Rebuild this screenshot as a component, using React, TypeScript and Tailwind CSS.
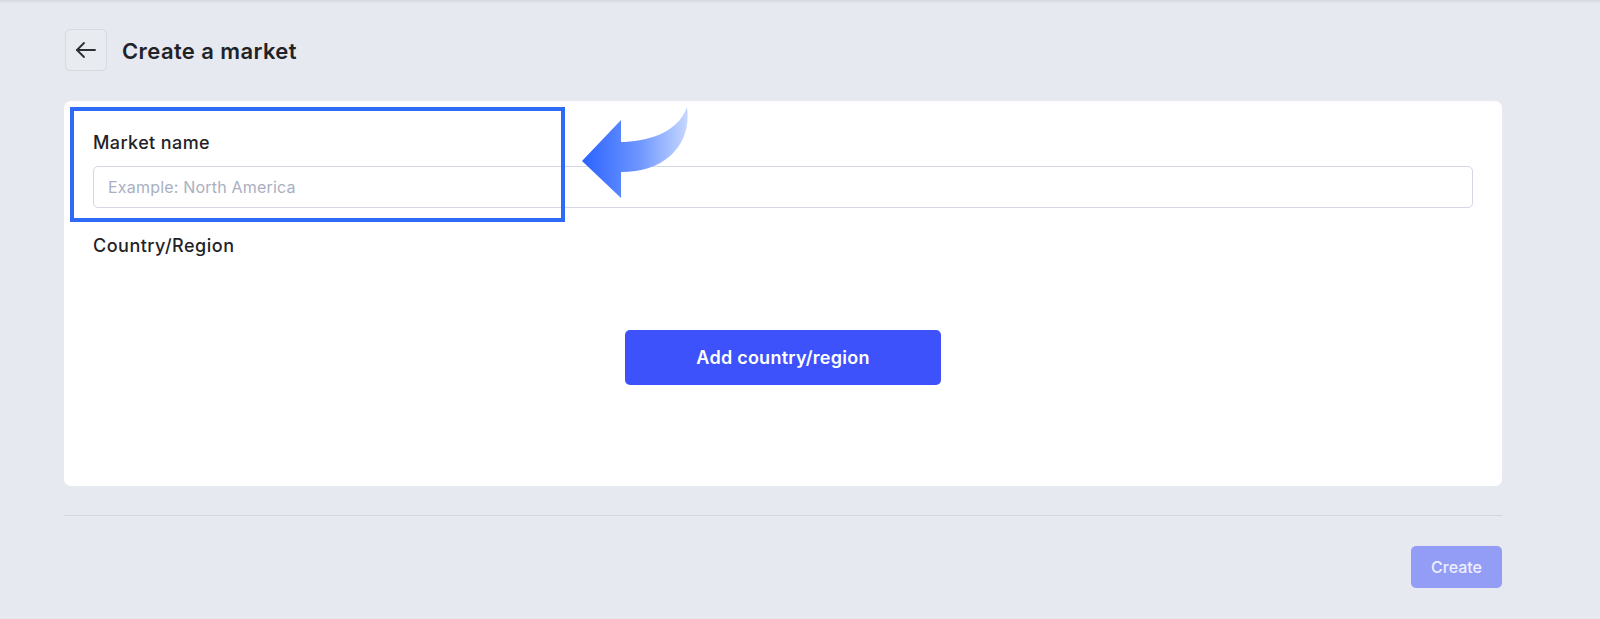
import React from 'react'

const CurvedArrow = () => (
  <svg width="108" height="94" viewBox="0 0 108 94" fill="none">
    <defs>
      <linearGradient id="arrowGrad" x1="0" y1="0" x2="1" y2="0">
        <stop offset="0%" stopColor="#2a62ff" />
        <stop offset="55%" stopColor="#6f97ff" />
        <stop offset="100%" stopColor="#c6d7ff" />
      </linearGradient>
    </defs>
    <path
      d="M0 55 L39 14 L39 36 C62 36 96 28 105 1 C110 38 84 66 39 66 L39 92 Z"
      fill="url(#arrowGrad)"
    />
  </svg>
)

const BackIcon = () => (
  <svg width="22" height="22" viewBox="0 0 22 22" fill="none" stroke="#2b2f36" strokeWidth="1.8" strokeLinecap="round" strokeLinejoin="round">
    <path d="M20 11H2" />
    <path d="M9 4l-7 7 7 7" />
  </svg>
)

const App = () => {
  return (
    <div className="w-full min-h-[619px] bg-[#e6e9ef] font-['Inter',sans-serif] text-[#1f2328]">
      <div className="h-1 bg-gradient-to-b from-[#d6d9df] to-[#e6e9ef]"></div>
      <div className="ml-[64px] w-[1438px] pt-[25px]">
        {/* Header */}
        <div className="flex items-center gap-[15px] pl-px">
          <button className="w-[42px] h-[42px] flex items-center justify-center rounded-[5px] border border-[#d5d9e2] bg-[#e8ebf0]">
            <BackIcon />
          </button>
          <h1 className="mt-[2px] text-[22px] font-semibold tracking-[0.4px]">Create a market</h1>
        </div>

        {/* Card */}
        <div className="relative mt-[30px] bg-white rounded-[7px] px-[29px] pt-[30px] h-[385px]">
          <div className="absolute left-[6px] top-[6px] w-[495px] h-[115px] border-[4px] border-[#2f6af6]"></div>
          <div className="absolute left-[518px] top-[5px]">
            <CurvedArrow />
          </div>

          <label className="block text-[18px] leading-[24px] font-medium tracking-[0.4px]">Market name</label>
          <input
            className="mt-[11px] w-full h-[42px] rounded-[5px] border border-[#d3d7e3] px-[14px] text-[16px] tracking-[0.2px] outline-none placeholder:text-[#a9afc0]"
            placeholder="Example: North America"
          />
          <div className="mt-[26px] text-[18px] leading-[24px] font-medium tracking-[0.5px]">Country/Region</div>

          <div className="flex justify-center mt-[72px]">
            <button className="w-[316px] h-[55px] rounded-[5px] bg-[#3d52fb] text-white text-[18px] font-semibold tracking-[0.25px]">
              Add country/region
            </button>
          </div>
        </div>

        {/* Footer */}
        <div className="mt-[29px] h-px bg-[#d3d7df]"></div>
        <div className="flex justify-end mt-[30px]">
          <button className="w-[91px] h-[42px] rounded-[5px] bg-[#949df5] text-[#eef0ff] text-[16px] font-medium">
            Create
          </button>
        </div>
      </div>
    </div>
  )
}

export default App
